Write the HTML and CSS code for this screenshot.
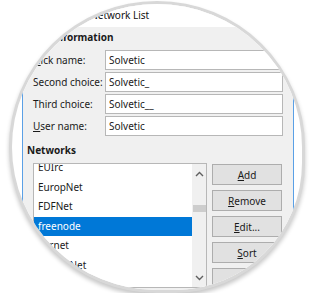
FILE: index.html
```html
<!DOCTYPE html>
<html lang="en">

<head>
    <meta charset="UTF-8">
    <meta name="viewport" content="width=device-width, initial-scale=1.0">
    <title>Network List</title>
    <link rel="stylesheet" href="styles.css">
</head>

<body>
    <div class="lens">
        <div class="window">
            <div class="titlebar">HexChat: Network List</div>

            <div class="client">
                <div class="group-title">User Information</div>
                <div class="user-grid">
                    <label><u>N</u>ick name:</label>
                    <div class="entry">Solvetic</div>
                    <label>Second choice:</label>
                    <div class="entry">Solvetic_</div>
                    <label>Third choice:</label>
                    <div class="entry">Solvetic__</div>
                    <label><u>U</u>ser name:</label>
                    <div class="entry">Solvetic</div>
                </div>

                <div class="group-title networks-title">Networks</div>
                <div class="networks">
                    <div class="list">
                        <div class="items">
                            <div class="item">EUIrc</div>
                            <div class="item">EuropNet</div>
                            <div class="item">FDFNet</div>
                            <div class="item selected">freenode</div>
                            <div class="item">Furnet</div>
                            <div class="item">GalaxyNet</div>
                            <div class="item">GameSurge</div>
                        </div>
                        <div class="scrollbar">
                            <svg class="arrow" width="9" height="6" viewBox="0 0 9 6">
                                <path d="M1 5 L4.5 1.5 L8 5" fill="none" stroke="#606060" stroke-width="1.4"/>
                            </svg>
                            <div class="thumb"></div>
                            <svg class="arrow down" width="9" height="6" viewBox="0 0 9 6">
                                <path d="M1 1 L4.5 4.5 L8 1" fill="none" stroke="#606060" stroke-width="1.4"/>
                            </svg>
                        </div>
                    </div>
                    <div class="buttons">
                        <button><u>A</u>dd</button>
                        <button><u>R</u>emove</button>
                        <button><u>E</u>dit...</button>
                        <button><u>S</u>ort</button>
                        <button>Favor</button>
                    </div>
                </div>
                <div class="options">
                    <span class="check"></span>
                    <span>Skip network list on startup</span>
                </div>
            </div>
        </div>
    </div>
</body>

</html>
```

FILE: styles.css
```css
body {
    margin: 0;
    padding: 0;
    background-color: #fff;
    font-family: 'Noto Sans', 'Open Sans', sans-serif;
    font-size: 10px;
    color: #1a1a1a;
}

/* Round magnifier crop */
.lens {
    width: 296px;
    height: 292px;
    margin: 1px 0 0 9px;
    box-sizing: border-box;
    border: 3px solid #d8d8d8;
    border-radius: 148px 148px 130px 148px / 146px 146px 130px 146px;
    overflow: hidden;
    background-color: #fff;
    box-shadow: 0 3px 4px rgba(0, 0, 0, 0.22);
}

.window {
    width: 272px;
    margin-left: 10px;
    box-sizing: border-box;
    border-left: 1px solid #5aa0e6;
    border-right: 1px solid #5aa0e6;
    height: 400px;
    background-color: #f0f0f0;
}

.titlebar {
    height: 23px;
    line-height: 22px;
    padding-left: 22px;
    background-color: #fff;
    color: #111;
    white-space: nowrap;
}

.client {
    padding: 2px 0 0 4px;
}

.group-title {
    font-weight: bold;
    line-height: 16px;
    height: 16px;
}

.user-grid {
    display: grid;
    grid-template-columns: 72px 178px;
    row-gap: 2px;
    margin: 5px 0 0 6px;
}

.user-grid label {
    line-height: 20px;
    white-space: nowrap;
}

.entry {
    height: 20px;
    line-height: 18px;
    box-sizing: border-box;
    border: 1px solid #b7b7b7;
    background-color: #fff;
    padding-left: 3px;
}

.networks-title {
    margin-top: 6px;
}

.networks {
    display: flex;
    gap: 5px;
    margin: 5px 0 0 6px;
}

.list {
    width: 174px;
    height: 125px;
    box-sizing: border-box;
    border: 1px solid #b7b7b7;
    background-color: #fff;
    display: flex;
    overflow: hidden;
}

.items {
    flex: 1;
    margin-top: -6px;
}

.item {
    height: 19.5px;
    line-height: 19.5px;
    padding-left: 4px;
}

.item.selected {
    background-color: #0078d7;
    color: #fff;
}

.scrollbar {
    width: 14px;
    background-color: #f0f0f0;
    display: flex;
    flex-direction: column;
    align-items: center;
}

.arrow {
    margin-top: 7px;
}

.arrow.down {
    margin-top: 63px;
}

.thumb {
    width: 13px;
    height: 7px;
    margin-top: 28px;
    background-color: #cdcdcd;
}

.buttons {
    display: flex;
    flex-direction: column;
    gap: 5px;
    margin-top: 1px;
}

button {
    width: 70px;
    height: 21px;
    padding: 0;
    border: 1px solid #adadad;
    background-color: #e1e1e1;
    font-family: inherit;
    font-size: 10px;
    color: #1a1a1a;
}

.options {
    display: flex;
    align-items: center;
    gap: 5px;
    margin: 5px 0 0 6px;
}

.check {
    width: 11px;
    height: 11px;
    border: 1px solid #333;
    background-color: #fff;
}
```
